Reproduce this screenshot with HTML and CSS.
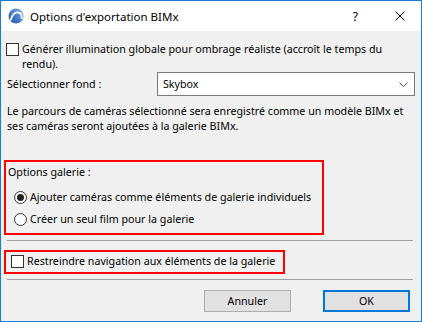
FILE: index.html
```html
<!DOCTYPE html>
<html lang="fr">
<head>
    <meta charset="UTF-8">
    <meta name="viewport" content="width=device-width, initial-scale=1.0">
    <title>Options d'exportation BIMx</title>
    <link rel="stylesheet" href="styles.css">
</head>
<body>
    <div class="window">
        <div class="titlebar">
            <svg class="app-icon" width="16" height="16" viewBox="0 0 16 16">
                <defs>
                    <linearGradient id="g" x1="0" y1="1" x2="1" y2="0">
                        <stop offset="0" stop-color="#1c4fa8"/>
                        <stop offset="1" stop-color="#7ab0ee"/>
                    </linearGradient>
                </defs>
                <circle cx="8" cy="8" r="7.5" fill="url(#g)"/>
                <path d="M2.5 12.5 C4 7 7 4 10.5 4.5 C13 5 14 8 13.6 11" fill="none" stroke="#fff" stroke-width="1.8"/>
            </svg>
            <span class="title">Options d'exportation BIMx</span>
            <span class="help">?</span>
            <svg class="close" width="10" height="10" viewBox="0 0 10 10">
                <path d="M0.5 0.5 L9.5 9.5 M9.5 0.5 L0.5 9.5" stroke="#000" stroke-width="1"/>
            </svg>
        </div>

        <div class="client">
            <div class="check top-check">
                <span class="box"></span>
                <span class="check-text">Générer illumination globale pour ombrage réaliste (accroît le temps du rendu).</span>
            </div>

            <div class="field-row">
                <span class="field-label">Sélectionner fond :</span>
                <div class="select">
                    <span>Skybox</span>
                    <svg width="9" height="5" viewBox="0 0 9 5">
                        <path d="M0.5 0.5 L4.5 4.5 L8.5 0.5" fill="none" stroke="#555" stroke-width="1"/>
                    </svg>
                </div>
            </div>

            <p class="note">Le parcours de caméras sélectionné sera enregistré comme un modèle BIMx et ses caméras seront ajoutées à la galerie BIMx.</p>

            <div class="highlight gallery">
                <div class="group-label">Options galerie :</div>
                <div class="radio">
                    <span class="dot checked"></span>
                    <span>Ajouter caméras comme éléments de galerie individuels</span>
                </div>
                <div class="radio">
                    <span class="dot"></span>
                    <span>Créer un seul film pour la galerie</span>
                </div>
            </div>

            <div class="sep"></div>

            <div class="highlight restrict">
                <div class="check">
                    <span class="box"></span>
                    <span>Restreindre navigation aux éléments de la galerie</span>
                </div>
            </div>

            <div class="sep"></div>

            <div class="buttons">
                <button class="btn">Annuler</button>
                <button class="btn default">OK</button>
            </div>
        </div>
    </div>
</body>
</html>
```
FILE: styles.css
```css
* {
    box-sizing: border-box;
}

body {
    margin: 0;
    font-family: "Noto Sans", sans-serif;
    font-size: 10.7px;
    color: #000;
    background: #fff;
}

.window {
    width: 422px;
    height: 322px;
    border: 1px solid #1a7bd3;
    display: flex;
    flex-direction: column;
    background: #f0f0f0;
    overflow: hidden;
}

.titlebar {
    flex: none;
    height: 30px;
    background: #fff;
    display: flex;
    align-items: center;
    padding: 0 0 0 7px;
}

.app-icon {
    margin-right: 6px;
}

.title {
    flex: 1;
    font-size: 11.5px;
}

.help {
    font-size: 12px;
    margin-right: 37px;
}

.close {
    margin-right: 16px;
}

.client {
    flex: 1;
    padding: 11px 6px 0 5px;
}

.check {
    display: flex;
    align-items: flex-start;
    line-height: 15px;
}

.box {
    flex: none;
    width: 13px;
    height: 13px;
    border: 1px solid #333;
    background: #fff;
    margin: 1px 3px 0 0;
}

.top-check .check-text {
    max-width: 380px;
}

.field-row {
    display: flex;
    align-items: center;
    padding-left: 1px;
}

.field-label {
    width: 150px;
}

.select {
    flex: 1;
    height: 24px;
    border: 1px solid #7a7a7a;
    background: #fff;
    display: flex;
    align-items: center;
    justify-content: space-between;
    padding: 0 6px 0 5px;
}

.note {
    margin: 8px 0 0 1px;
    line-height: 15px;
}

.highlight {
    border: 2px solid #f00;
}

.gallery {
    width: 320px;
    margin: 26px 0 0 -2px;
    padding: 3px 0 6px 2px;
}

.group-label {
    line-height: 15px;
}

.radio {
    display: flex;
    align-items: center;
    line-height: 15px;
    margin-top: 10px;
    padding-left: 6px;
}

.radio + .radio {
    margin-top: 7px;
}

.dot {
    width: 13px;
    height: 13px;
    border: 1px solid #333;
    border-radius: 50%;
    background: #fff;
    margin-right: 3px;
    display: flex;
    align-items: center;
    justify-content: center;
}

.dot.checked::after {
    content: "";
    width: 7px;
    height: 7px;
    border-radius: 50%;
    background: #222;
}

.sep {
    height: 1px;
    background: #a0a0a0;
    margin: 5px 2px 0 1px;
}

.restrict {
    width: 281px;
    margin: 9px 0 0 -2px;
    padding: 2px 0 3px 5px;
}

.buttons {
    display: flex;
    justify-content: flex-end;
    gap: 32px;
    margin-top: 10px;
    padding-right: 5px;
}

.btn {
    width: 87px;
    height: 22px;
    font-family: "Noto Sans", sans-serif;
    font-size: 10.7px;
    background: #e1e1e1;
    border: 1px solid #adadad;
    padding: 0;
}

.btn.default {
    border: 2px solid #0078d7;
}
```
